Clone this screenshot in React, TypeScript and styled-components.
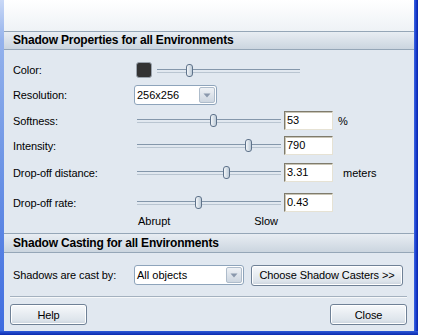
import React from "react";
import styled, { createGlobalStyle } from "styled-components";

const Global = createGlobalStyle`
  html, body { margin: 0; padding: 0; background: #ffffff; }
  body {
    font-family: "Liberation Sans", Arial, sans-serif;
    font-size: 11px;
    color: #000;
  }
  * { box-sizing: border-box; }
`;

const Frame = styled.div`
  width: 418px;
  height: 335px;
  display: flex;
  flex-direction: column;
`;

const Middle = styled.div`
  flex: 1;
  display: flex;
  min-height: 0;
`;

const LeftEdge = styled.div`
  width: 4px;
  background: linear-gradient(to bottom, #c9d8f6 0px, #94b2ec 40px, #6f96e6 160px, #3e6ce0 100%);
`;

const RightEdge = styled.div`
  width: 4px;
  background: linear-gradient(to right, #3c66e2, #1538c8 60%, #0a25a8);
`;

const BottomEdge = styled.div`
  height: 4px;
  background: linear-gradient(to bottom, #2e5ad8, #0b2aae);
`;

const Inner = styled.div`
  flex: 1;
  display: flex;
  flex-direction: column;
  background: #e1e8f0;
`;

const Banner = styled.div`
  height: 31px;
  background: linear-gradient(to bottom, #ffffff, #eef2f6);
`;

const SectionHeader = styled.div`
  height: 20px;
  display: flex;
  align-items: center;
  padding-left: 9px;
  border-top: 1px solid #95a6b7;
  border-bottom: 1px solid #95a6b7;
  background: linear-gradient(to bottom, #e8edf3, #cbd5df);
  font-weight: bold;
  font-size: 12px;
  letter-spacing: -0.2px;
`;

const Section = styled.div<{ $pt: number; $pb: number }>`
  display: flex;
  flex-direction: column;
  padding-top: ${(p) => p.$pt}px;
  padding-bottom: ${(p) => p.$pb}px;
`;

const Row = styled.div<{ $h: number }>`
  height: ${(p) => p.$h}px;
  display: flex;
  align-items: center;
`;

const Label = styled.div`
  width: 130px;
  padding-left: 9px;
  white-space: nowrap;
  letter-spacing: -0.1px;
`;

const Swatch = styled.div`
  width: 16px;
  height: 16px;
  margin-left: 2px;
  background: #333333;
  border: 1px solid #9aa3ad;
  border-radius: 3px;
`;

const Track = styled.div<{ $w: number; $ml: number }>`
  position: relative;
  width: ${(p) => p.$w}px;
  height: 13px;
  margin-left: ${(p) => p.$ml}px;
  &::before {
    content: "";
    display: block;
    margin-top: 5px;
    height: 2px;
    border-top: 1px solid #8497ab;
    border-bottom: 1px solid #b9c5d1;
  }
`;

const Thumb = styled.div`
  position: absolute;
  top: 0;
  width: 7px;
  height: 13px;
  border: 1px solid #5e728a;
  border-radius: 3px;
  background: linear-gradient(to right, #f3f6f9, #bccad7);
`;

const Slider = ({ w, ml, value }: { w: number; ml: number; value: number }) => (
  <Track $w={w} $ml={ml}>
    <Thumb style={{ left: Math.round((w - 7) * value) }} />
  </Track>
);

const TextBox = styled.div`
  width: 49px;
  height: 19px;
  margin-left: 3px;
  padding-left: 2px;
  line-height: 17px;
  background: #ffffff;
  border: 1px solid;
  border-color: #7f7b6c #e6e2d4 #e6e2d4 #7f7b6c;
  box-shadow: inset 1px 1px 0 #c9c5b6;
`;

const Unit = styled.div<{ $ml: number }>`
  margin-left: ${(p) => p.$ml}px;
`;

const Combo = styled.div<{ $w: number }>`
  width: ${(p) => p.$w}px;
  height: 20px;
  display: flex;
  align-items: stretch;
  background: #ffffff;
  border: 1px solid #8ea4bb;
  border-radius: 3px;
`;

const ComboText = styled.div`
  flex: 1;
  padding-left: 2px;
  line-height: 18px;
`;

const ComboButton = styled.div`
  width: 16px;
  margin: 1px;
  border: 1px solid #aebccb;
  border-radius: 2px;
  background: linear-gradient(to bottom, #eef1f5, #cdd6e0);
  display: flex;
  align-items: center;
  justify-content: center;
`;

const Arrow = () => (
  <svg width="8" height="5" viewBox="0 0 8 5">
    <path d="M0.5 0.5 L7.5 0.5 L4 4.5 Z" fill="#8a98ac" />
  </svg>
);

const Ticks = styled.div`
  height: 13px;
  margin-top: -3px;
  display: flex;
  justify-content: space-between;
  padding-left: 134px;
  width: 274px;
  line-height: 13px;
`;

const PushButton = styled.div<{ $w: number; $ml?: number }>`
  width: ${(p) => p.$w}px;
  height: 21px;
  margin-left: ${(p) => p.$ml ?? 0}px;
  display: flex;
  align-items: center;
  justify-content: center;
  border: 1px solid #6f8196;
  border-radius: 3px;
  background: linear-gradient(to bottom, #f7f9fb, #dde4eb 80%, #c9d2dc);
  box-shadow: inset 0 0 0 1px #ffffff;
  letter-spacing: -0.1px;
`;

const CastRow = styled.div`
  height: 20px;
  display: flex;
  align-items: center;
  margin-top: 12px;
`;

const Separator = styled.div`
  margin: 11px 7px 0 6px;
  height: 2px;
  border-top: 1px solid #a4b1bf;
  border-bottom: 1px solid #f6f8fa;
`;

const Footer = styled.div`
  display: flex;
  justify-content: space-between;
  padding: 6px 7px 6px 6px;
`;

export default function App() {
  return (
    <>
      <Global />
      <Frame>
        <Middle>
          <LeftEdge />
          <Inner>
            <Banner />
            <SectionHeader>Shadow Properties for all Environments</SectionHeader>
            <Section $pt={8} $pb={5}>
              <Row $h={24}>
                <Label>Color:</Label>
                <Swatch />
                <Slider w={143} ml={5} value={0.21} />
              </Row>
              <Row $h={26}>
                <Label>Resolution:</Label>
                <Combo $w={83}>
                  <ComboText>256x256</ComboText>
                  <ComboButton>
                    <Arrow />
                  </ComboButton>
                </Combo>
              </Row>
              <Row $h={25}>
                <Label>Softness:</Label>
                <Slider w={144} ml={3} value={0.53} />
                <TextBox>53</TextBox>
                <Unit $ml={5}>%</Unit>
              </Row>
              <Row $h={25}>
                <Label>Intensity:</Label>
                <Slider w={144} ml={3} value={0.79} />
                <TextBox>790</TextBox>
              </Row>
              <Row $h={29}>
                <Label>Drop-off distance:</Label>
                <Slider w={144} ml={3} value={0.63} />
                <TextBox>3.31</TextBox>
                <Unit $ml={10}>meters</Unit>
              </Row>
              <Row $h={31}>
                <Label>Drop-off rate:</Label>
                <Slider w={144} ml={3} value={0.42} />
                <TextBox>0.43</TextBox>
              </Row>
              <Ticks>
                <span>Abrupt</span>
                <span>Slow</span>
              </Ticks>
            </Section>
            <SectionHeader>Shadow Casting for all Environments</SectionHeader>
            <CastRow>
              <Label>Shadows are cast by:</Label>
              <Combo $w={110}>
                <ComboText>All objects</ComboText>
                <ComboButton>
                  <Arrow />
                </ComboButton>
              </Combo>
              <PushButton $w={152} $ml={7}>Choose Shadow Casters &gt;&gt;</PushButton>
            </CastRow>
            <Separator />
            <Footer>
              <PushButton $w={77}>Help</PushButton>
              <PushButton $w={77}>Close</PushButton>
            </Footer>
          </Inner>
          <RightEdge />
        </Middle>
        <BottomEdge />
      </Frame>
    </>
  );
}
